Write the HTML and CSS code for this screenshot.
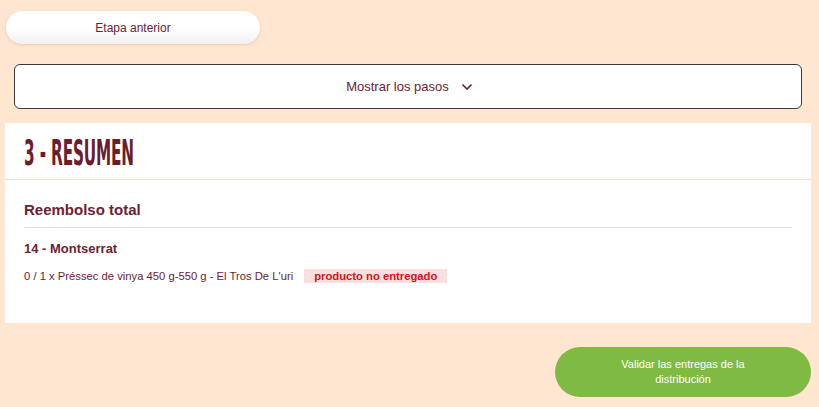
FILE: index.html
```html
<!DOCTYPE html>
<html lang="es">
<head>
    <meta charset="UTF-8">
    <meta name="viewport" content="width=device-width, initial-scale=1.0">
    <link rel="stylesheet" href="styles.css">
</head>
<body>
    <div class="page">
        <button class="back-btn">Etapa anterior</button>

        <div class="steps-toggle">
            <span>Mostrar los pasos</span>
            <svg class="chevron" width="12" height="8" viewBox="0 0 12 8">
                <path d="M1.5 1.5 L6 6 L10.5 1.5" fill="none" stroke="#6d2233" stroke-width="1.6"/>
            </svg>
        </div>

        <div class="card">
            <div class="card-header">
                <h1>3 - RESUMEN</h1>
            </div>
            <div class="card-body">
                <h2>Reembolso total</h2>
                <h3>14 - Montserrat</h3>
                <div class="product-line">
                    <span>0 / 1 x Préssec de vinya 450 g-550 g - El Tros De L'uri</span>
                    <span class="badge">producto no entregado</span>
                </div>
            </div>
        </div>

        <div class="actions">
            <button class="validate-btn">Validar las entregas de la distribución</button>
        </div>
    </div>
</body>
</html>
```

FILE: styles.css
```css
body {
    margin: 0;
    background-color: #ffe6d0;
    font-family: "Liberation Sans", Arial, sans-serif;
    color: #6d2233;
}

.page {
    padding: 11px 8px 0 5px;
}

.back-btn {
    display: block;
    width: 254px;
    height: 33px;
    margin-left: 1px;
    border: none;
    border-radius: 17px;
    background: linear-gradient(#ffffff 55%, #f0f0f0);
    box-shadow: 0 1px 3px rgba(200, 150, 110, 0.35);
    font-family: "Liberation Sans", Arial, sans-serif;
    font-size: 12px;
    color: #6d2233;
    cursor: pointer;
}

.steps-toggle {
    margin: 20px 9px 0 9px;
    height: 43px;
    border: 1px solid #3a3a3a;
    border-radius: 6px;
    background-color: #fff;
    display: flex;
    align-items: center;
    justify-content: center;
    gap: 12px;
    font-size: 13px;
    padding-left: 3px;
}

.chevron {
    margin-top: 1px;
}

.card {
    margin-top: 14px;
    background-color: #fff;
}

.card-header {
    height: 56px;
    border-bottom: 1px solid #fde0c4;
    padding-left: 19px;
    display: flex;
    align-items: center;
}

.card-header h1 {
    margin: 4px 0 0 0;
    font-family: "DejaVu Sans Condensed", "DejaVu Sans", sans-serif;
    font-weight: bold;
    font-size: 35px;
    color: #6b1d2b;
    transform: scaleX(0.485);
    transform-origin: left center;
    white-space: nowrap;
    letter-spacing: -0.3px;
}

.card-body {
    padding: 21px 19px 40px 19px;
}

.card-body h2 {
    margin: 0;
    font-size: 15px;
    font-weight: bold;
    padding-bottom: 9px;
    border-bottom: 1px solid #e2e2e2;
}

.card-body h3 {
    margin: 13px 0 0 0;
    font-size: 13px;
    font-weight: bold;
}

.product-line {
    margin-top: 13px;
    font-size: 11.25px;
    display: flex;
    align-items: center;
    gap: 11px;
}

.badge {
    background-color: #fbe0df;
    color: #d2141a;
    font-weight: bold;
    padding: 1px 10px;
}

.actions {
    display: flex;
    justify-content: flex-end;
    margin-top: 24px;
}

.validate-btn {
    width: 256px;
    height: 50px;
    border: none;
    border-radius: 25px;
    background-color: #7fba42;
    color: #fff;
    font-family: "Liberation Sans", Arial, sans-serif;
    font-size: 11px;
    line-height: 15px;
    padding: 0 50px;
    cursor: pointer;
}
```
